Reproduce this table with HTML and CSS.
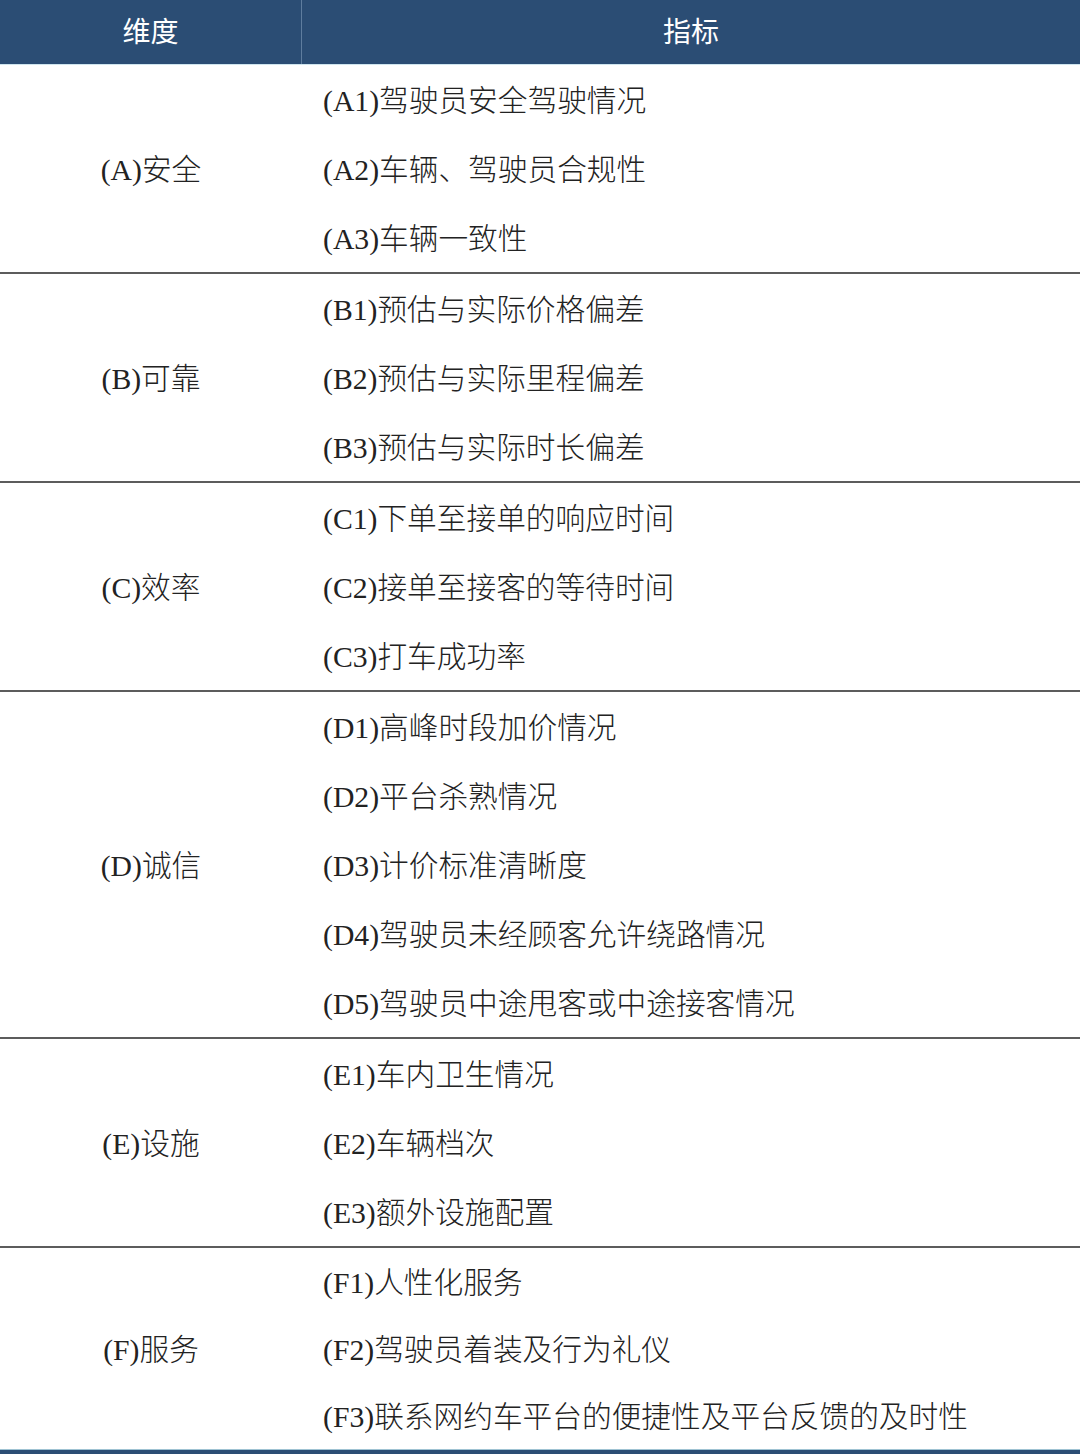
FILE: index.html
```html
<!DOCTYPE html>
<html lang="zh-CN">
<head>
<meta charset="utf-8">
<title>维度指标</title>
<link rel="stylesheet" href="styles.css">
</head>
<body>
<div class="table">
  <div class="head">
    <div class="hcell dim">维度</div>
    <div class="hcell ind">指标</div>
  </div>
  <div class="group">
    <div class="gname">(A)安全</div>
    <div class="items">
      <div class="item">(A1)驾驶员安全驾驶情况</div>
      <div class="item">(A2)车辆、驾驶员合规性</div>
      <div class="item">(A3)车辆一致性</div>
    </div>
  </div>
  <div class="group">
    <div class="gname">(B)可靠</div>
    <div class="items">
      <div class="item">(B1)预估与实际价格偏差</div>
      <div class="item">(B2)预估与实际里程偏差</div>
      <div class="item">(B3)预估与实际时长偏差</div>
    </div>
  </div>
  <div class="group">
    <div class="gname">(C)效率</div>
    <div class="items">
      <div class="item">(C1)下单至接单的响应时间</div>
      <div class="item">(C2)接单至接客的等待时间</div>
      <div class="item">(C3)打车成功率</div>
    </div>
  </div>
  <div class="group">
    <div class="gname">(D)诚信</div>
    <div class="items">
      <div class="item">(D1)高峰时段加价情况</div>
      <div class="item">(D2)平台杀熟情况</div>
      <div class="item">(D3)计价标准清晰度</div>
      <div class="item">(D4)驾驶员未经顾客允许绕路情况</div>
      <div class="item">(D5)驾驶员中途甩客或中途接客情况</div>
    </div>
  </div>
  <div class="group">
    <div class="gname">(E)设施</div>
    <div class="items">
      <div class="item">(E1)车内卫生情况</div>
      <div class="item">(E2)车辆档次</div>
      <div class="item">(E3)额外设施配置</div>
    </div>
  </div>
  <div class="group last">
    <div class="gname">(F)服务</div>
    <div class="items">
      <div class="item">(F1)人性化服务</div>
      <div class="item">(F2)驾驶员着装及行为礼仪</div>
      <div class="item">(F3)联系网约车平台的便捷性及平台反馈的及时性</div>
    </div>
  </div>
  <div class="bottom-bar"></div>
</div>
</body>
</html>
```

FILE: styles.css
```css
html, body {
  margin: 0;
  padding: 0;
  background: #ffffff;
}

.table {
  width: 1080px;
  font-family: "Liberation Serif", "Noto Sans CJK SC", serif;
  font-size: 29.7px;
  font-weight: 300;
  color: #222222;
}

.head {
  display: flex;
  height: 65px;
  background: #2b4d74;
  border-bottom: 1px solid #cfe5ee;
  box-sizing: border-box;
}

.hcell {
  display: flex;
  align-items: center;
  justify-content: center;
  color: #ffffff;
  font-family: "Noto Sans CJK SC", sans-serif;
  font-size: 28px;
  font-weight: 400;
  padding-bottom: 4px;
}

.hcell.dim {
  width: 301px;
  border-right: 1px solid #5f7d9e;
}

.hcell.ind {
  flex: 1;
}

.group {
  display: flex;
  border-bottom: 2px solid #5c5c5c;
}

.group.last {
  border-bottom: none;
}

.gname {
  width: 302px;
  display: flex;
  align-items: center;
  justify-content: center;
  padding-bottom: 2px;
  box-sizing: border-box;
}

.items {
  flex: 1;
  display: flex;
  flex-direction: column;
}

.item {
  height: 69px;
  display: flex;
  align-items: center;
  padding-left: 21px;
  padding-bottom: 2px;
  box-sizing: border-box;
  white-space: nowrap;
}

.group.last .item {
  height: 67px;
}

.bottom-bar {
  height: 6px;
  background: #2b4d74;
  border-top: 1px solid #9fc3d3;
}
```
